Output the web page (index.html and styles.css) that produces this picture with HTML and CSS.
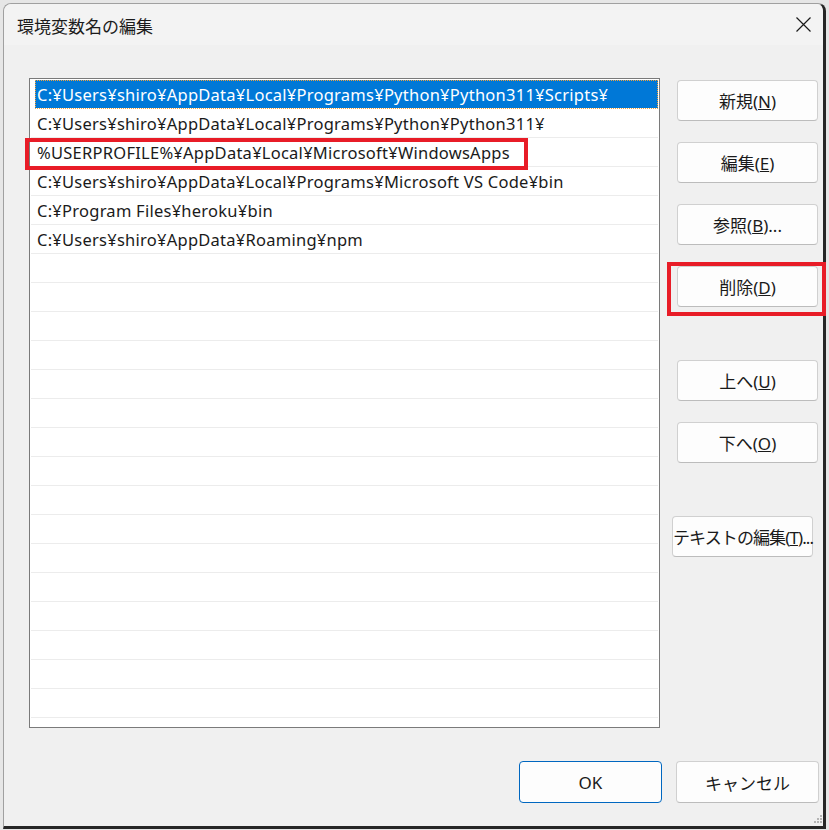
FILE: index.html
```html
<!DOCTYPE html>
<html lang="ja">
<head>
    <meta charset="UTF-8">
    <meta name="viewport" content="width=device-width, initial-scale=1.0">
    <title>環境変数名の編集</title>
    <link rel="stylesheet" href="styles.css">
</head>
<body>
    <div class="screen">
        <div class="dialog">
            <div class="titlebar">
                <span class="title">環境変数名の編集</span>
                <svg class="close" width="15" height="15" viewBox="0 0 15 15">
                    <path d="M0.5 0.5 L14.5 14.5 M14.5 0.5 L0.5 14.5" stroke="#1a1a1a" stroke-width="1.2" fill="none"/>
                </svg>
            </div>

            <div class="content">
                <div class="list">
                    <div class="row selected">C:¥Users¥shiro¥AppData¥Local¥Programs¥Python¥Python311¥Scripts¥</div>
                    <div class="row">C:¥Users¥shiro¥AppData¥Local¥Programs¥Python¥Python311¥</div>
                    <div class="row">%USERPROFILE%¥AppData¥Local¥Microsoft¥WindowsApps</div>
                    <div class="row">C:¥Users¥shiro¥AppData¥Local¥Programs¥Microsoft VS Code¥bin</div>
                    <div class="row">C:¥Program Files¥heroku¥bin</div>
                    <div class="row">C:¥Users¥shiro¥AppData¥Roaming¥npm</div>
                    <div class="row"></div>
                    <div class="row"></div>
                    <div class="row"></div>
                    <div class="row"></div>
                    <div class="row"></div>
                    <div class="row"></div>
                    <div class="row"></div>
                    <div class="row"></div>
                    <div class="row"></div>
                    <div class="row"></div>
                    <div class="row"></div>
                    <div class="row"></div>
                    <div class="row"></div>
                    <div class="row"></div>
                    <div class="row"></div>
                    <div class="row"></div>
                    <div class="row"></div>
                </div>

                <div class="side">
                    <button class="btn">新規(<u>N</u>)</button>
                    <button class="btn">編集(<u>E</u>)</button>
                    <button class="btn">参照(<u>B</u>)...</button>
                    <button class="btn">削除(<u>D</u>)</button>
                    <button class="btn group">上へ(<u>U</u>)</button>
                    <button class="btn">下へ(<u>O</u>)</button>
                    <button class="btn group wide">テキストの編集(<u>T</u>)...</button>
                </div>
            </div>

            <div class="footer">
                <button class="btn big ok">OK</button>
                <button class="btn big">キャンセル</button>
            </div>

            <svg class="grip" width="10" height="10" viewBox="0 0 10 10">
                <rect x="7" y="1" width="2" height="2" fill="#b4b4b4"/>
                <rect x="4" y="4" width="2" height="2" fill="#b4b4b4"/>
                <rect x="7" y="4" width="2" height="2" fill="#b4b4b4"/>
                <rect x="1" y="7" width="2" height="2" fill="#b4b4b4"/>
                <rect x="4" y="7" width="2" height="2" fill="#b4b4b4"/>
                <rect x="7" y="7" width="2" height="2" fill="#b4b4b4"/>
            </svg>
        </div>

        <div class="mark mark-row"></div>
        <div class="mark mark-btn"></div>
    </div>
</body>
</html>
```

FILE: styles.css
```css
body {
    margin: 0;
    font-family: "Noto Sans", "Noto Sans CJK JP", sans-serif;
    color: #1a1a1a;
}

.screen {
    position: relative;
    width: 829px;
    height: 830px;
    background-color: #e6e6e6;
    overflow: hidden;
}

.dialog {
    position: relative;
    box-sizing: border-box;
    margin: 3px 0 0 3px;
    width: 823px;
    height: 826px;
    background-color: #f0f0f0;
    border-left: 1px solid #a0a0a0;
    border-top: 1px solid #a0a0a0;
    border-right: 3px solid #262626;
    border-bottom: 3px solid #262626;
    border-radius: 8px 8px 0 0;
    display: flex;
    flex-direction: column;
}

.titlebar {
    height: 41px;
    background-color: #f3f3f3;
    display: flex;
    align-items: center;
    justify-content: space-between;
    padding: 0 12px 0 13px;
    border-radius: 8px 8px 0 0;
}

.title {
    font-family: "Noto Sans CJK JP", sans-serif;
    font-size: 17px;
    color: #1b1b1b;
    margin-top: 2px;
}

.content {
    display: flex;
    align-items: flex-start;
    padding: 33px 0 0 25px;
}

.list {
    box-sizing: border-box;
    width: 631px;
    height: 650px;
    background-color: #ffffff;
    border: 1px solid #7a7a7a;
    padding: 1px 1px 0 1px;
    overflow: hidden;
}

.row {
    box-sizing: border-box;
    height: 29px;
    line-height: 29px;
    padding-left: 6px;
    border-bottom: 1px solid #ececec;
    font-size: 16.5px;
    letter-spacing: 0.25px;
    white-space: nowrap;
    color: #1a1a1a;
}

.row.selected {
    margin-left: 4px;
    padding-left: 2px;
    background-color: #0078d7;
    color: #ffffff;
    outline: 1px dotted #f4a23c;
    outline-offset: -1px;
    border-bottom-color: #ffffff;
}

.side {
    display: flex;
    flex-direction: column;
    gap: 21px;
    margin: 2px 0 0 17px;
}

.btn {
    box-sizing: border-box;
    width: 141px;
    height: 41px;
    padding: 0;
    background-color: #fdfdfd;
    border: 1px solid #d0d0d0;
    border-bottom-color: #bcbcbc;
    border-radius: 4px;
    font-family: "Noto Sans", "Noto Sans CJK JP", sans-serif;
    font-size: 17px;
    color: #1a1a1a;
    white-space: nowrap;
}

.btn.group {
    margin-top: 32px;
}

.btn.wide {
    margin-left: -5px;
    letter-spacing: -0.9px;
}

.footer {
    display: flex;
    justify-content: flex-end;
    gap: 14px;
    margin-top: 33px;
    padding-right: 4px;
}

.btn.big {
    width: 143px;
    height: 42px;
}

.btn.ok {
    border-color: #0067c0;
}

.grip {
    position: absolute;
    right: 0;
    bottom: 2px;
}

.mark {
    position: absolute;
    box-sizing: border-box;
    border: 4px solid #e81c27;
}

.mark-row {
    left: 25px;
    top: 138px;
    width: 503px;
    height: 32px;
}

.mark-btn {
    left: 667px;
    top: 262px;
    width: 159px;
    height: 54px;
}
```
